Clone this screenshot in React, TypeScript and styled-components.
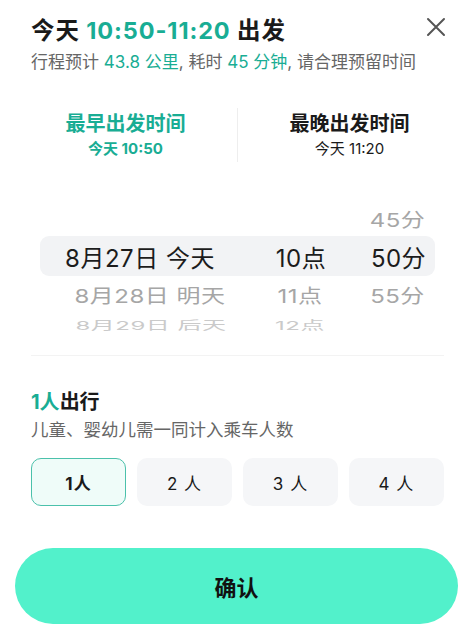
import React from "react"
import styled, { createGlobalStyle } from "styled-components"

const teal = "#19ad94"
const font = `"Inter", "Noto Sans CJK SC", sans-serif`

const GlobalStyle = createGlobalStyle`
    html, body {
        margin: 0;
        padding: 0;
        background: #fff;
    }
    body {
        font-family: ${font};
        color: #1a1a1a;
    }
`

const Sheet = styled.div`
    width: 475px;
    height: 630px;
    box-sizing: border-box;
    padding: 0 31px;
    background: #fff;
    overflow: hidden;
`

const Header = styled.div`
    display: flex;
    justify-content: space-between;
    align-items: flex-start;
    padding-top: 15px;
`

const Title = styled.div`
    font-size: 23.5px;
    font-weight: 700;
    line-height: 32px;
    letter-spacing: 0.9px;
`

const Hl = styled.span`
    color: ${teal};
`

const Sub = styled.div`
    margin-top: 3px;
    font-size: 17px;
    line-height: 24px;
    color: #666;
`

const Close = styled.button`
    border: 0;
    background: none;
    padding: 0;
    margin: 1px -3px 0 0;
    width: 22px;
    height: 22px;
    display: flex;
    align-items: center;
    justify-content: center;
`

const Tabs = styled.div`
    display: flex;
    align-items: center;
    margin: 34px -17px 0;
    height: 54px;
`

const Tab = styled.div`
    flex: 1;
    display: flex;
    flex-direction: column;
    align-items: center;
`

const TabDivider = styled.div`
    width: 1px;
    align-self: stretch;
    background: #eeeeee;
`

const TabTitle = styled.div<{ $active?: boolean }>`
    font-size: 20px;
    font-weight: 700;
    line-height: 28px;
    color: ${p => (p.$active ? teal : "#1a1a1a")};
`

const TabTime = styled.div<{ $active?: boolean }>`
    font-size: 15px;
    line-height: 22px;
    font-weight: ${p => (p.$active ? 700 : 400)};
    color: ${p => (p.$active ? teal : "#1a1a1a")};
`

const Picker = styled.div`
    position: relative;
    margin: 37px 9px 0;
    height: 135px;
    overflow: hidden;
    display: grid;
    grid-template-columns: 200px 122px 1fr;
`

const Highlight = styled.div`
    position: absolute;
    left: 0;
    right: 0;
    top: 37px;
    height: 40px;
    border-radius: 9px;
    background: #f2f3f5;
`

const Column = styled.div`
    position: relative;
    display: flex;
    flex-direction: column;
`

const Cell = styled.div<{ $dist: number }>`
    height: ${p => (p.$dist > 1 ? 22 : 38)}px;
    display: flex;
    align-items: center;
    justify-content: center;
    white-space: pre;
    font-size: 24px;
    letter-spacing: 0.5px;
    color: ${p => (p.$dist === 0 ? "#1c1c1c" : p.$dist === 1 ? "#a6a6a6" : "#cacaca")};
    transform: ${p => (p.$dist === 0 ? "none" : p.$dist === 1 ? "scaleY(0.8)" : "scaleY(0.5)")};
`

const Separator = styled.div`
    margin-top: 21px;
    height: 1px;
    background: #f3f3f3;
`

const SectionTitle = styled.div`
    margin-top: 32px;
    font-size: 20px;
    font-weight: 700;
    line-height: 28px;
`

const SectionSub = styled.div`
    margin-top: 2px;
    font-size: 17.5px;
    line-height: 24px;
    color: #666;
`

const Seats = styled.div`
    margin-top: 16px;
    display: grid;
    grid-template-columns: repeat(4, 1fr);
    gap: 11px;
`

const Seat = styled.button<{ $active?: boolean }>`
    height: 48px;
    box-sizing: border-box;
    border-radius: 10px;
    border: 1.5px solid ${p => (p.$active ? "#4bc1ab" : "transparent")};
    background: ${p => (p.$active ? "#effcf9" : "#f5f6f8")};
    font-family: ${font};
    font-size: 17px;
    font-weight: ${p => (p.$active ? 700 : 400)};
    letter-spacing: 1px;
    color: #1a1a1a;
`

const Confirm = styled.button`
    display: block;
    width: calc(100% + 30px);
    margin: 42px -15px 0 -16px;
    height: 76px;
    border: 0;
    border-radius: 38px;
    background: #52f1cb;
    font-family: ${font};
    font-size: 22px;
    font-weight: 700;
    color: #111;
`

type Col = { items: (string | null)[]; shift: number[] }

const columns: Col[] = [
    { items: [null, "8月27日 今天", "8月28日 明天", "8月29日 后天"], shift: [0, 0, 10, 11] },
    { items: [null, "10点", "11点", "12点"], shift: [0, 0, -1, -1] },
    { items: ["45分", "50分", "55分", null], shift: [-1, 0, -1, 0] },
]

export default function App() {
    return (
        <Sheet>
            <GlobalStyle />
            <Header>
                <div>
                    <Title>
                        今天 <Hl>10:50-11:20</Hl> 出发
                    </Title>
                    <Sub>
                        行程预计 <Hl>43.8 公里</Hl>, 耗时 <Hl>45 分钟</Hl>, 请合理预留时间
                    </Sub>
                </div>
                <Close aria-label="关闭">
                    <svg width="20" height="20" viewBox="0 0 20 20">
                        <path d="M2 2 L18 18 M18 2 L2 18" stroke="#555" strokeWidth="2" strokeLinecap="round" />
                    </svg>
                </Close>
            </Header>

            <Tabs>
                <Tab>
                    <TabTitle $active>最早出发时间</TabTitle>
                    <TabTime $active>今天 10:50</TabTime>
                </Tab>
                <TabDivider />
                <Tab>
                    <TabTitle>最晚出发时间</TabTitle>
                    <TabTime>今天 11:20</TabTime>
                </Tab>
            </Tabs>

            <Picker>
                <Highlight />
                {columns.map((col, ci) => (
                    <Column key={ci}>
                        {col.items.map((text, ri) => (
                            <Cell
                                key={ri}
                                $dist={Math.abs(ri - 1)}
                                style={col.shift[ri] ? { marginLeft: col.shift[ri] * 2 } : undefined}
                            >
                                {text ?? ""}
                            </Cell>
                        ))}
                    </Column>
                ))}
            </Picker>

            <Separator />

            <SectionTitle>
                <Hl>1人</Hl>出行
            </SectionTitle>
            <SectionSub>儿童、婴幼儿需一同计入乘车人数</SectionSub>

            <Seats>
                <Seat $active>1人</Seat>
                <Seat>2 人</Seat>
                <Seat>3 人</Seat>
                <Seat>4 人</Seat>
            </Seats>

            <Confirm>确认</Confirm>
        </Sheet>
    )
}
